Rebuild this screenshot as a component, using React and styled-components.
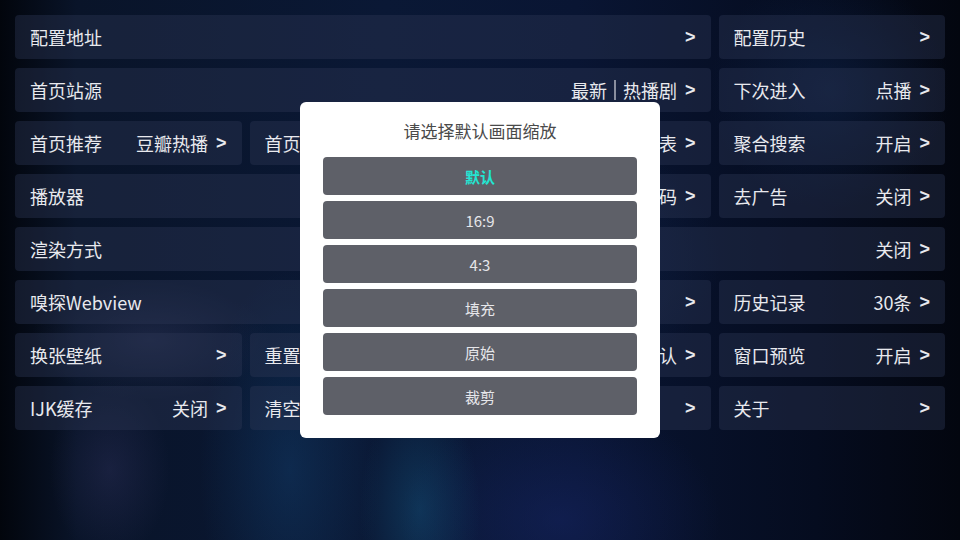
import React from 'react';
import styled, { createGlobalStyle } from 'styled-components';

const GlobalStyle = createGlobalStyle`
  html, body {
    margin: 0;
    padding: 0;
    width: 960px;
    height: 540px;
    overflow: hidden;
  }
  body {
    font-family: "Noto Sans CJK SC", "Noto Sans", sans-serif;
    background: #07112a;
  }
`;

const Screen = styled.div`
  position: relative;
  width: 960px;
  height: 540px;
  box-sizing: border-box;
  padding: 15px 15px 0 15px;
  overflow: hidden;
  background:
    radial-gradient(ellipse 60px 120px at 420px 510px, rgba(20, 80, 120, 0.5), transparent),
    radial-gradient(ellipse 90px 200px at 290px 470px, rgba(20, 70, 120, 0.4), transparent),
    radial-gradient(ellipse 60px 90px at 110px 470px, rgba(60, 60, 110, 0.3), transparent),
    radial-gradient(ellipse 120px 60px at 150px 340px, rgba(70, 75, 120, 0.3), transparent),
    radial-gradient(ellipse 200px 140px at 520px 260px, rgba(30, 60, 110, 0.4), transparent),
    radial-gradient(ellipse 160px 120px at 560px 520px, rgba(25, 40, 110, 0.45), transparent),
    radial-gradient(ellipse 120px 120px at 830px 90px, rgba(20, 50, 100, 0.35), transparent),
    linear-gradient(90deg, #02050c 0%, #091429 8%, #0a1835 40%, #091533 60%, #050c1f 85%, #03060f 100%);
`;

const Grid = styled.div`
  display: grid;
  grid-template-columns: repeat(4, 1fr);
  grid-auto-rows: 44px;
  column-gap: 8px;
  row-gap: 9px;
`;

const Cell = styled.div`
  grid-column: span ${p => p.$span || 1};
  display: flex;
  align-items: center;
  justify-content: space-between;
  padding: 0 15px;
  border-radius: 4px;
  background: rgba(46, 54, 86, 0.4);
  color: #e8e9ee;
  font-size: 18px;
  white-space: nowrap;
  overflow: hidden;
`;

const Label = styled.span``;

const Value = styled.span`
  display: flex;
  align-items: center;
`;

const Sep = styled.span`
  display: inline-block;
  width: 2px;
  height: 20px;
  margin: 0 7px;
  background: #8a8f9e;
`;

const Arrow = styled.span`
  margin-left: 8px;
  font-family: "Liberation Sans", "Noto Sans", sans-serif;
  font-weight: 700;
  font-size: 18px;
`;

const Overlay = styled.div`
  position: absolute;
  inset: 0;
  display: flex;
  align-items: center;
  justify-content: center;
`;

const Dialog = styled.div`
  width: 360px;
  box-sizing: border-box;
  padding: 16px 23px 23px;
  background: #ffffff;
  border-radius: 6px;
  display: flex;
  flex-direction: column;
  gap: 6px;
`;

const Title = styled.div`
  text-align: center;
  color: #4a4a4a;
  font-size: 17px;
  line-height: 26px;
  margin-bottom: 7px;
`;

const Option = styled.div`
  height: 38px;
  display: flex;
  align-items: center;
  justify-content: center;
  background: #5e6068;
  border-radius: 4px;
  color: ${p => (p.$active ? '#23e5d2' : '#e6e6ea')};
  font-weight: ${p => (p.$active ? 700 : 400)};
  font-size: 15px;
`;

const items = [
  { label: '配置地址', span: 3 },
  { label: '配置历史' },
  { label: '首页站源', span: 3, value: ['最新', '热播剧'] },
  { label: '下次进入', value: '点播' },
  { label: '首页推荐', value: '豆瓣热播' },
  { label: '首页多行' },
  { label: '', value: '列表' },
  { label: '聚合搜索', value: '开启' },
  { label: '播放器', span: 3, value: ['IJK', '硬解码'] },
  { label: '去广告', value: '关闭' },
  { label: '渲染方式', span: 4, value: '关闭' },
  { label: '嗅探Webview', span: 3 },
  { label: '历史记录', value: '30条' },
  { label: '换张壁纸' },
  { label: '重置壁纸' },
  { label: '画面缩放', value: '默认' },
  { label: '窗口预览', value: '开启' },
  { label: 'IJK缓存', value: '关闭' },
  { label: '清空缓存' },
  { label: '' },
  { label: '关于' },
];

const options = ['默认', '16:9', '4:3', '填充', '原始', '裁剪'];

const renderValue = value => {
  if (!value) return null;
  if (Array.isArray(value)) {
    return (
      <>
        {value[0]}
        <Sep />
        {value[1]}
      </>
    );
  }
  return value;
};

const App = () => (
  <Screen>
    <GlobalStyle />
    <Grid>
      {items.map((item, i) => (
        <Cell key={i} $span={item.span}>
          <Label>{item.label}</Label>
          <Value>
            {renderValue(item.value)}
            <Arrow>&gt;</Arrow>
          </Value>
        </Cell>
      ))}
    </Grid>
    <Overlay>
      <Dialog>
        <Title>请选择默认画面缩放</Title>
        {options.map((o, i) => (
          <Option key={o} $active={i === 0}>{o}</Option>
        ))}
      </Dialog>
    </Overlay>
  </Screen>
);

export default App;
